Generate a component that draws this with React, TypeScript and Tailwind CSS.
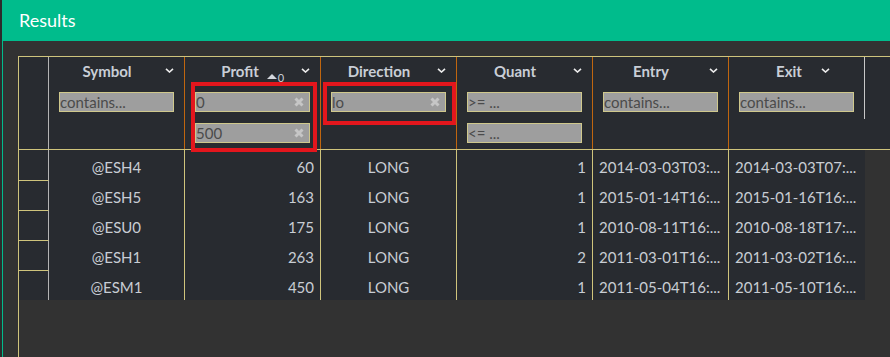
type Filter = { text: string; clear?: boolean };
type Col = {
  title: string;
  align: "center" | "right" | "left";
  filters: Filter[];
  titleClass: string;
  chevronClass: string;
  sort?: boolean;
};

const columns: Col[] = [
  { title: "Symbol", align: "center", filters: [{ text: "contains..." }], titleClass: "", chevronClass: "mr-[10px]" },
  { title: "Profit", align: "right", sort: true, filters: [{ text: "0", clear: true }, { text: "500", clear: true }], titleClass: "pr-[6px]", chevronClass: "mr-[10px]" },
  { title: "Direction", align: "center", filters: [{ text: "lo", clear: true }], titleClass: "", chevronClass: "mr-[10px]" },
  { title: "Quant", align: "right", filters: [{ text: ">= ..." }, { text: "<= ..." }], titleClass: "", chevronClass: "mr-[10px]" },
  { title: "Entry", align: "left", filters: [{ text: "contains..." }], titleClass: "", chevronClass: "mr-[10px]" },
  { title: "Exit", align: "left", filters: [{ text: "contains..." }], titleClass: "pl-[28px]", chevronClass: "mr-[34px]" },
];

const rows = [
  ["@ESH4", "60", "LONG", "1", "2014-03-03T03:...", "2014-03-03T07:..."],
  ["@ESH5", "163", "LONG", "1", "2015-01-14T16:...", "2015-01-16T16:..."],
  ["@ESU0", "175", "LONG", "1", "2010-08-11T16:...", "2010-08-18T17:..."],
  ["@ESH1", "263", "LONG", "2", "2011-03-01T16:...", "2011-03-02T16:..."],
  ["@ESM1", "450", "LONG", "1", "2011-05-04T16:...", "2011-05-10T16:..."],
];

const alignClass = {
  center: "justify-center",
  right: "justify-end pr-[6px]",
  left: "justify-start pl-[6px]",
};

const Chevron = ({ className }: { className: string }) => (
  <svg viewBox="0 0 9 5" className={`w-[9px] h-[5px] mt-[7px] shrink-0 ${className}`}>
    <path d="M1 0.8 L4.5 4 L8 0.8" fill="none" stroke="#ececec" strokeWidth="1.6" />
  </svg>
);

const FilterBox = ({ f }: { f: Filter }) => (
  <div className="mt-[11px] ml-[10px] w-[115px] h-[20px] border border-[#cfc88c] bg-[#9e9e9e] flex items-center justify-between text-[15px] leading-[18px] text-[#4b4b4b]">
    <span className="whitespace-nowrap">{f.text}</span>
    {f.clear && (
      <svg viewBox="0 0 10 10" className="w-[10px] h-[10px] mr-[5px]">
        <path d="M1.5 1.5 L8.5 8.5 M8.5 1.5 L1.5 8.5" stroke="#c6c6c6" strokeWidth="3" />
      </svg>
    )}
  </div>
);

export default function App() {
  return (
    <div className="w-[890px] h-[357px] overflow-hidden bg-[#323232] flex font-['Lato',sans-serif]">
      <div className="w-[2px] bg-[#2c2c2c]" />
      <div className="w-px bg-[#00bc8c]" />
      <div className="flex-1 flex flex-col">
        <div className="h-[41px] bg-[#00bc8c] flex items-center pl-[16px] pb-[1px] text-white text-[18px]">
          Results
        </div>

        <div className="flex-1 ml-[15px] mt-[15px] border-l border-[#cfc47c] flex flex-col relative">
          {/* header */}
          <div className="flex h-[94px] border-y border-[#cfc47c] bg-[#282b30]">
            <div className="w-[30px] border-r border-[#b4b4b4]" />
            {columns.map((c, i) => (
              <div
                key={c.title}
                className={`flex flex-col ${i === columns.length - 1 ? "w-[135px]" : "w-[136px] border-r border-[#c0660f]"}`}
              >
                <div className="flex items-start mt-[4px] h-[20px]">
                  <div className={`flex-1 flex justify-center ${c.titleClass}`}>
                    <span className="relative text-[15px] leading-[20px] font-bold text-[#c9ced6]">
                      {c.title}
                      {c.sort && (
                        <span className="absolute left-full top-[10px] ml-[8px] h-[10px] flex items-end gap-[1px]">
                          <svg viewBox="0 0 10 5" className="w-[10px] h-[5px] mb-[2px]">
                            <path d="M0 5 L5 0 L10 5 Z" fill="#d3d7dd" />
                          </svg>
                          <span className="text-[11px] leading-[10px] font-normal translate-y-[2px]">0</span>
                        </span>
                      )}
                    </span>
                  </div>
                  <Chevron className={c.chevronClass} />
                </div>
                {c.filters.map((f, j) => (
                  <FilterBox key={j} f={f} />
                ))}
              </div>
            ))}
            <div className="w-px h-[62px] bg-[#c8c8c8]" />
            <div className="flex-1" />
          </div>

          {/* rows */}
          <div className="flex flex-col w-[846px] bg-[#282b30]">
            {rows.map((r, i) => (
              <div key={i} className="flex h-[30px]">
                <div className={`w-[30px] border-r border-[#b4b4b4] ${i > 0 ? "border-t border-t-[#cfc47c]" : ""}`} />
                {r.map((v, j) => (
                  <div
                    key={j}
                    className={`flex items-center pt-[4px] overflow-hidden whitespace-nowrap text-[15px] leading-[18px] text-[#c8cdd4] ${alignClass[columns[j].align]} ${j === r.length - 1 ? "w-[135px]" : "w-[136px] border-r border-[#cfc47c]"}`}
                  >
                    {v}
                  </div>
                ))}
              </div>
            ))}
          </div>

          {/* annotation boxes */}
          <div className="absolute left-[172px] top-[26px] w-[126px] h-[70px] border-4 border-[#e3161d]" />
          <div className="absolute left-[304px] top-[26px] w-[133px] h-[43px] border-4 border-[#e3161d]" />
        </div>
      </div>
    </div>
  );
}
